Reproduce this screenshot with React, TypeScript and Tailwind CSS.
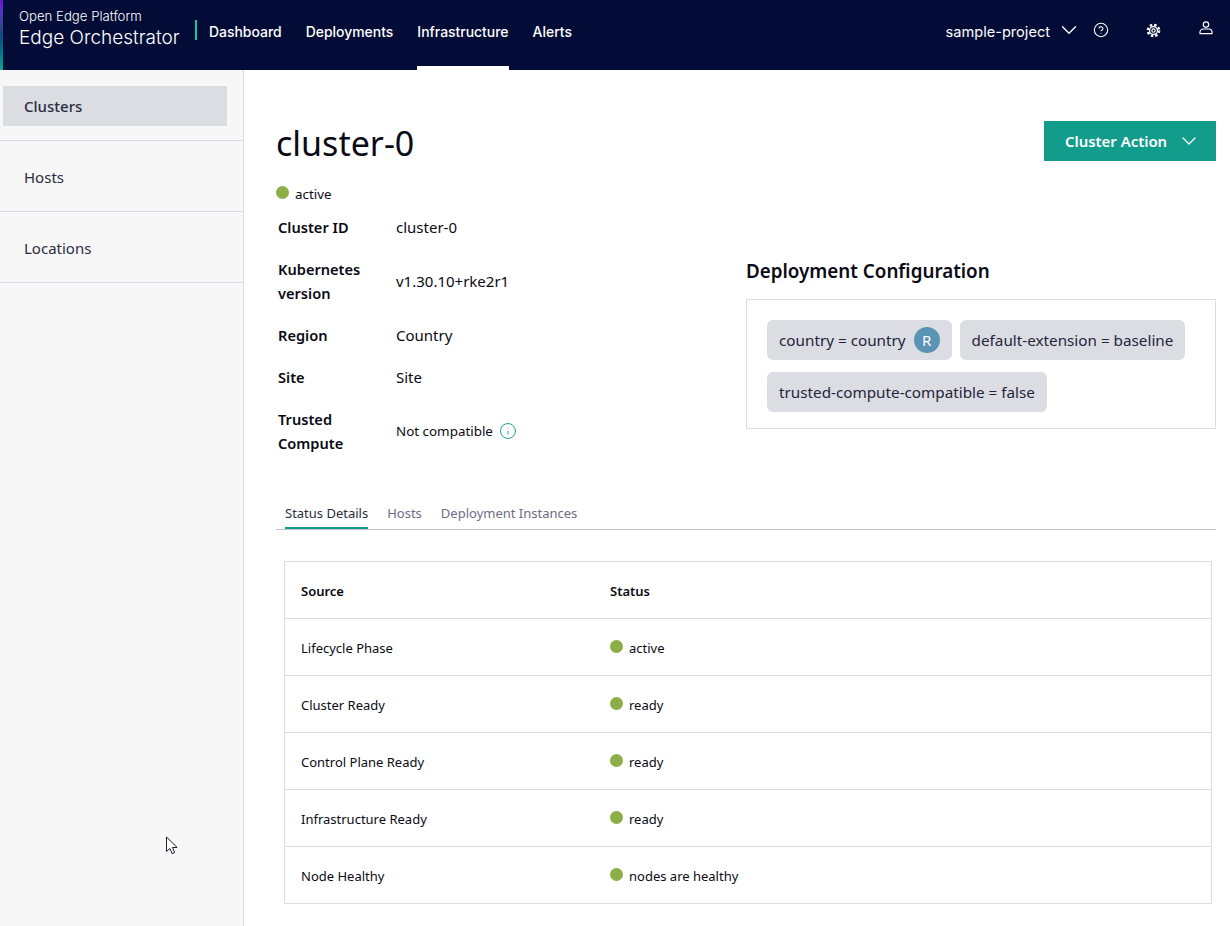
import { ChevronDown, CircleHelp, Info } from 'lucide-react'

const NAV_ITEMS = ['Dashboard', 'Deployments', 'Infrastructure', 'Alerts']
const SIDE_ITEMS = ['Clusters', 'Hosts', 'Locations']
const STATUS_ROWS = [
  ['Lifecycle Phase', 'active'],
  ['Cluster Ready', 'ready'],
  ['Control Plane Ready', 'ready'],
  ['Infrastructure Ready', 'ready'],
  ['Node Healthy', 'nodes are healthy'],
]

function Dot() {
  return <span className="h-[13px] w-[13px] shrink-0 rounded-full bg-[#8bae46]" />
}

function GearIcon() {
  return (
    <svg viewBox="0 0 16 16" className="h-[15px] w-[15px]" fill="none" stroke="currentColor">
      <circle cx="8" cy="8" r="6" strokeWidth="2.6" strokeDasharray="2.6 2.11" />
      <circle cx="8" cy="8" r="4.2" strokeWidth="1.4" />
      <circle cx="8" cy="8" r="1.8" strokeWidth="1.2" />
    </svg>
  )
}

function UserIcon() {
  return (
    <svg viewBox="0 0 14 14" className="h-[14px] w-[14px]" fill="none" stroke="currentColor" strokeWidth="1.2">
      <circle cx="7" cy="3.6" r="2.7" />
      <path d="M1 12.6v-1.4c0-2 1.6-3.2 3.2-3.2h5.6c1.6 0 3.2 1.2 3.2 3.2v1.4z" />
    </svg>
  )
}

function Header() {
  return (
    <header className="flex h-[70px] shrink-0 bg-[#020c36] font-['Inter',sans-serif] text-white">
      <div className="w-[3px] bg-gradient-to-b from-[#6a0dd8] via-[#0a4a80] to-[#0ea58f]" />
      <div className="ml-4 mt-[8px] flex w-[176px] flex-col font-light">
        <span className="text-[13.2px] leading-[17px]">Open Edge Platform</span>
        <span className="mt-[1px] text-[19px] leading-[24px]">Edge Orchestrator</span>
      </div>
      <div className="mt-5 h-5 w-[2px] bg-[#14c8ac]" />
      <nav className="ml-3 flex gap-6">
        {NAV_ITEMS.map((item) => (
          <a
            key={item}
            className={`flex h-[70px] items-start pt-[22px] text-[13.95px] font-medium leading-5 ${
              item === 'Infrastructure' ? 'border-b-4 border-white' : ''
            }`}
          >
            {item}
          </a>
        ))}
      </nav>
      <div className="ml-auto flex items-start">
        <span className="mt-[22px] text-[14.6px] leading-5">sample-project</span>
        <ChevronDown className="ml-[6px] mt-[17px] h-[26px] w-[26px]" strokeWidth={1.25} />
        <CircleHelp className="ml-[11px] mt-[22px] h-4 w-4" strokeWidth={1.6} />
        <span className="ml-[37px] mt-[23px]"><GearIcon /></span>
        <span className="ml-[38px] mr-[17px] mt-[21px]"><UserIcon /></span>
      </div>
    </header>
  )
}

function Sidebar() {
  return (
    <aside className="relative w-[244px] shrink-0 border-r border-[#dcdde3] bg-[#f7f7f7] font-['Noto_Sans',sans-serif] text-[15px] text-[#2b2c3e]">
      {SIDE_ITEMS.map((item, i) => (
        <div key={item} className="flex h-[71px] items-center border-b border-[#dcdde3] pl-[3px] pr-4 pt-[2px]">
          <div
            className={`flex h-10 w-full items-center pl-[21px] ${
              i === 0 ? 'bg-[#dcdde3] font-medium' : ''
            }`}
          >
            {item}
          </div>
        </div>
      ))}
      {/* mouse pointer captured in the screenshot */}
      <svg viewBox="0 0 14 20" className="absolute left-[165px] top-[766px] h-[20px] w-[14px]" fill="#fff" stroke="#1c1c2c" strokeWidth="1">
        <path d="M1.5 1v14.5l3.4-3 2.2 5.2 2.6-1.1-2.2-5.1h4.6z" />
      </svg>
    </aside>
  )
}

function Details() {
  return (
    <div className="grid grid-cols-[118px_1fr] items-center gap-y-[18px] pl-[2px] text-[15px] leading-6 text-[#0a0a14]">
      <span className="text-[14.6px] font-semibold">Cluster ID</span>
      <span>cluster-0</span>
      <span className="text-[14.6px] font-semibold">Kubernetes<br />version</span>
      <span>v1.30.10+rke2r1</span>
      <span className="text-[14.6px] font-semibold">Region</span>
      <span>Country</span>
      <span className="text-[14.6px] font-semibold">Site</span>
      <span>Site</span>
      <span className="text-[14.6px] font-semibold">Trusted<br />Compute</span>
      <span className="flex items-center text-[13.4px]">
        Not compatible
        <Info className="ml-[6px] h-[18px] w-[18px] text-[#129c8c]" strokeWidth={1.25} />
      </span>
    </div>
  )
}

function Chip({ children }: { children: React.ReactNode }) {
  return (
    <span className="flex h-10 items-center gap-2 rounded-md bg-[#dcdde3] px-3 text-[15.25px] text-[#24243c]">
      {children}
    </span>
  )
}

function DeploymentConfig() {
  return (
    <section className="w-[470px] pt-[93px]">
      <h2 className="text-[18.8px] font-semibold leading-[27px] text-[#0a0a14]">Deployment Configuration</h2>
      <div className="mt-[14px] flex h-[130px] flex-wrap content-start gap-x-2 gap-y-3 border border-[#dcdde3] px-5 pt-5">
        <Chip>
          country = country
          <span className="flex h-[26px] w-[26px] items-center justify-center rounded-full bg-[#5b93b4] text-[15px] text-white">
            R
          </span>
        </Chip>
        <Chip>default-extension = baseline</Chip>
        <Chip>trusted-compute-compatible = false</Chip>
      </div>
    </section>
  )
}

function StatusTable() {
  return (
    <div className="ml-2 mr-1 mt-[31px] border border-b-0 border-[#dcdde3] text-[13px] text-[#0a0a14]">
      <div className="flex h-[57px] items-center border-b border-[#dcdde3] pt-[4px] font-semibold">
        <span className="w-[325px] pl-4">Source</span>
        <span>Status</span>
      </div>
      {STATUS_ROWS.map(([source, status]) => (
        <div key={source} className="flex h-[57px] items-center border-b border-[#dcdde3] pt-[4px]">
          <span className="w-[325px] pl-4">{source}</span>
          <span className="flex items-center gap-[6px]">
            <span className="-mt-[5px] flex"><Dot /></span>
            {status}
          </span>
        </div>
      ))}
    </div>
  )
}

export default function App() {
  return (
    <div className="flex h-[926px] flex-col overflow-hidden bg-white">
      <Header />
      <div className="flex min-h-0 flex-1">
        <Sidebar />
        <main className="min-w-0 flex-1 pl-8 pr-[14px] pt-[51px] font-['Noto_Sans',sans-serif]">
          <div className="flex items-start justify-between">
            <h1 className="text-[34px] leading-[44px] text-[#0a0a14]">cluster-0</h1>
            <button className="flex h-10 w-[172px] items-center justify-between bg-[#129c8c] pl-[21px] pr-[15px] text-[14.9px] font-semibold text-white">
              Cluster Action
              <ChevronDown className="h-6 w-6" strokeWidth={1.25} />
            </button>
          </div>
          <div className="flex">
            <div className="w-[470px]">
              <div className="mt-[17px] flex h-6 items-center gap-[6px] text-[13.4px] text-[#0a0a14]">
                <span className="-mt-[3px] flex"><Dot /></span>
                active
              </div>
              <div className="mt-[9px]"><Details /></div>
            </div>
            <DeploymentConfig />
          </div>
          <div className="mt-[49px] flex h-[26px] gap-[19px] border-b border-[#c4c5d0] pl-[9px] text-[13px] text-[#6b6d85]">
            <span className="h-[25px] border-b-2 border-[#129c8c] text-[#2b2c3e]">Status Details</span>
            <span>Hosts</span>
            <span>Deployment Instances</span>
          </div>
          <StatusTable />
        </main>
      </div>
    </div>
  )
}
